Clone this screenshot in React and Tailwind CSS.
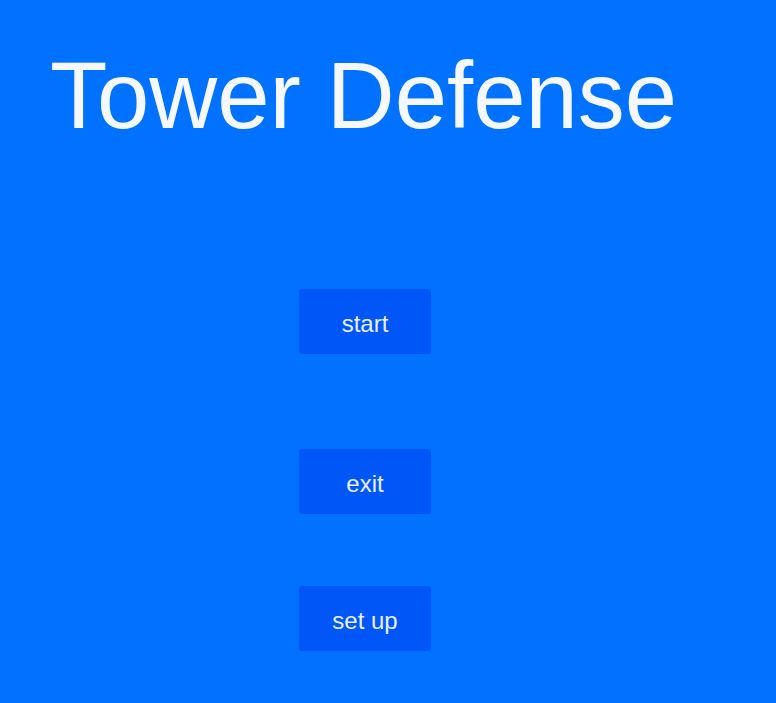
export default function App() {
  return (
    <div className="w-[776px] h-[703px] bg-[#0072ff] overflow-hidden" style={{ fontFamily: '"Liberation Sans", Arial, sans-serif' }}>
      <h1 className="pl-[50px] pt-[41px] text-[94px] leading-[110px] text-[#f5f8ff]">Tower Defense</h1>
      <div className="ml-[299px] mt-[138px] flex flex-col">
        <button className="w-[132px] h-[65px] pt-[4px] rounded-[3px] bg-[#0056f6] text-[24px] text-[#e8f0ff]">start</button>
        <button className="mt-[95px] w-[132px] h-[65px] pt-[4px] rounded-[3px] bg-[#0056f6] text-[24px] text-[#e8f0ff]">exit</button>
        <button className="mt-[72px] w-[132px] h-[65px] pt-[4px] rounded-[3px] bg-[#0056f6] text-[24px] text-[#e8f0ff]">set up</button>
      </div>
    </div>
  );
}
